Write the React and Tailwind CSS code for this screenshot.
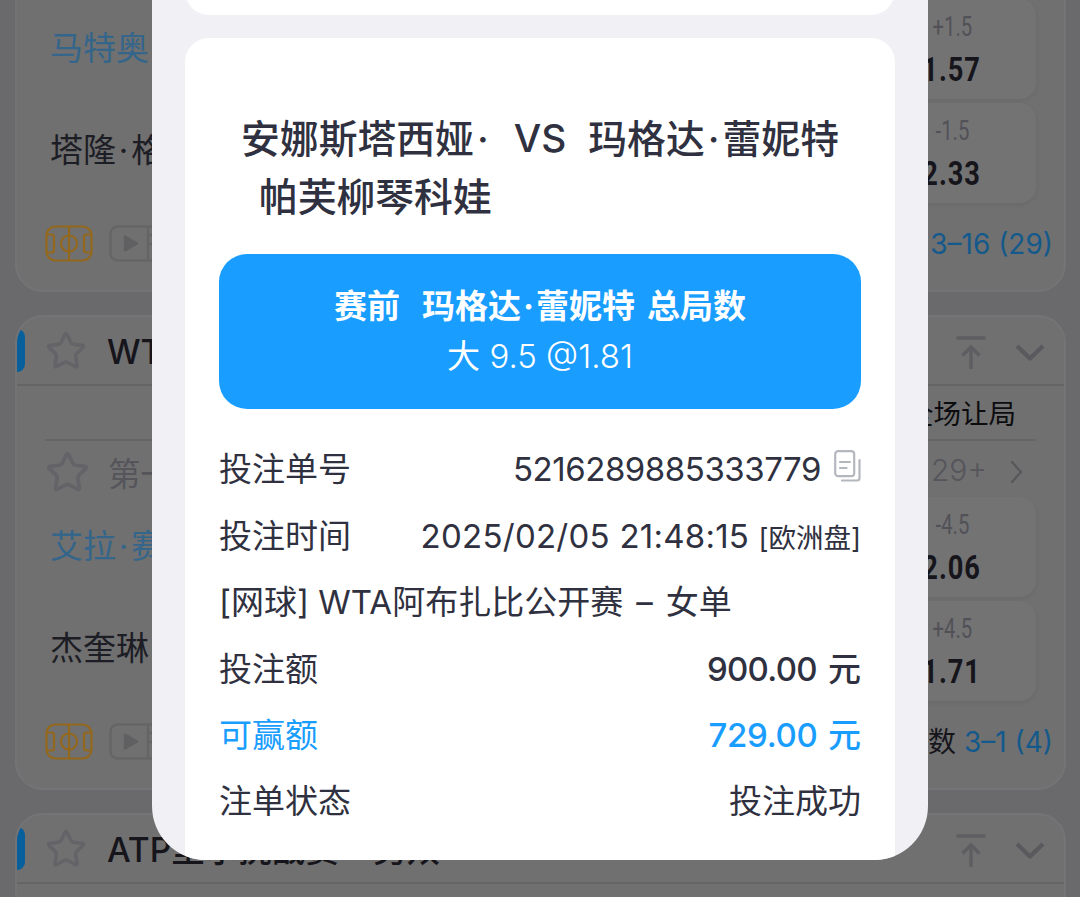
import React from "react";
import { Star } from "lucide-react";

const matches = [
  {
    league: "WTA阿布扎比公开赛 – 女单",
    home: "马特奥",
    away: "塔隆·格里",
    odds: [
      { line: "+1.5", price: "1.57" },
      { line: "-1.5", price: "2.33" },
    ],
    score: "3–16 (29)",
  },
  {
    league: "WTA阿布扎比公开赛 – 女单",
    home: "艾拉·赛德",
    away: "杰奎琳",
    odds: [
      { line: "-4.5", price: "2.06" },
      { line: "+4.5", price: "1.71" },
    ],
    score: "3–1 (4)",
  },
  {
    league: "ATP里尔挑战赛 – 男双",
    home: "",
    away: "",
    odds: [],
    score: "",
  },
];

// Names use a narrow middle dot between their parts
const Name = ({ children }) =>
  children.split("·").map((part, i) => (
    <React.Fragment key={i}>
      {i > 0 && <span className="inline-block w-[0.46em] text-center">·</span>}
      {part}
    </React.Fragment>
  ));

const CourtIcon = () => (
  <svg width="48" height="37" viewBox="0 0 48 37" fill="none" stroke="#94681c" strokeWidth="2.2">
    <rect x="1.5" y="1.5" width="45" height="34" rx="9" />
    <path d="M24 1.5v34M1.5 9.500H6.500a2.500 2.500 0 0 1 2.500 2.500v13a2.500 2.500 0 0 1-2.500 2.500H1.500M46.500 9.500h-5a2.500 2.500 0 0 0-2.500 2.500v13a2.500 2.500 0 0 0 2.500 2.500h5" />
    <circle cx="24" cy="18.500" r="8" />
  </svg>
);

const VideoIcon = () => (
  <svg width="56" height="37" viewBox="0 0 56 37" fill="none" stroke="#656566" strokeWidth="2.4">
    <rect x="1.500" y="1.500" width="53" height="34" rx="7" />
    <path d="M39 1.500v34M39 10h14M39 19h14" />
    <path d="M16 11.500v14l12-7z" fill="#606062" stroke="#606062" strokeLinejoin="round" />
  </svg>
);

const ToTopIcon = () => (
  <svg width="32" height="36" viewBox="0 0 32 36" fill="none" stroke="#5e5e62" strokeWidth="3.4">
    <path d="M1.500 5h29M16 36V14M7.500 22.500 16 14l8.500 8.500" />
  </svg>
);

const DownIcon = () => (
  <svg width="30" height="20" viewBox="0 0 30 20" fill="none" stroke="#5a5a5e" strokeWidth="4.400">
    <path d="m2 3 13 12.500L28 3" strokeLinejoin="round" />
  </svg>
);

const CopyIcon = () => (
  <svg width="27" height="32" viewBox="0 0 27 32" fill="none" stroke="#b5b7bf" strokeWidth="2.200" strokeLinecap="round">
    <rect x="1.200" y="1.200" width="19" height="25" rx="3" />
    <path d="M6 12h10M6 18h6.500M25.500 10v18a2.500 2.500 0 0 1-2.500 2.500H8" />
  </svg>
);

const MatchCard = ({ match }) => (
  <div className="h-[475px] shrink-0 overflow-hidden rounded-[28px] border-2 border-[#747476] bg-[#707070]">
    {/* League header */}
    <div className="flex h-[69px] items-center border-b-2 border-[#656568]">
      <div className="h-[43px] w-2 rounded-r-lg bg-[#075f9c]" />
      <Star className="ml-5 size-[42px] text-[#636368]" strokeWidth={2} />
      <span className="ml-5 flex-1 whitespace-nowrap pt-1 text-[33.500px] font-medium text-[#15151b]">
        {match.league}
      </span>
      <ToTopIcon />
      <div className="ml-7 mr-[19px] pt-1">
        <DownIcon />
      </div>
    </div>

    {/* Market header */}
    <div className="mx-7 flex h-[55px] items-center justify-end border-b-2 border-[#656567] pr-[20px] pt-1 text-[27.500px] text-[#0c0c0e]">
      全场让局
    </div>

    <div className="mx-7 flex h-[56px] items-center pt-1.5 text-[#55555b]">
      <Star className="size-[45px] text-[#636368]" strokeWidth={2} />
      <span className="ml-[18px] flex-1 pt-1.5 text-[32.500px]">第一盘</span>
      <span className="-mt-1 text-[30px] font-light">29+</span>
      <svg className="ml-[23px] mr-[13px]" width="13" height="24" viewBox="0 0 13 24" fill="none" stroke="currentColor" strokeWidth="2">
        <path d="m1.500 1.500 9.500 10.500L1.500 22.500" />
      </svg>
    </div>

    {/* Teams and odds */}
    <div className="mx-7 flex h-[204px] justify-between">
      <div className="flex flex-col pl-[5px] text-[33px]">
        <div className="flex h-[102px] items-center whitespace-nowrap pb-[3px] text-[#34658a]">
          <span><Name>{match.home}</Name></span>
        </div>
        <div className="flex h-[102px] items-center whitespace-nowrap pb-[3px] text-[#1d1d25]">
          <span><Name>{match.away}</Name></span>
        </div>
      </div>
      <div className="flex w-[168px] flex-col gap-1">
        {match.odds.map((odd) => (
          <div
            key={odd.line}
            className="flex h-[100px] flex-col items-center rounded-2xl bg-[#737374] pt-[9px] font-[Roboto] shadow-[0_2px_5px_rgba(0,0,0,0.06)]"
          >
            <span className="scale-x-[0.75] text-[27px] leading-[38px] text-[#515157]">{odd.line}</span>
            <span className="scale-x-[0.8] text-[34px] font-bold leading-[46px] tracking-[1.2px] text-[#15151b]">{odd.price}</span>
          </div>
        ))}
      </div>
    </div>

    {/* Footer */}
    <div className="flex h-[80px] items-center gap-4 pl-7 pr-[11px]">
      <CourtIcon />
      <VideoIcon />
      <span className="flex-1 pt-0.5 text-right text-[28px] text-[#15151b]">
        总局数 <span className="text-[#14598b]">{match.score}</span>
      </span>
    </div>
  </div>
);

const Row = ({ label, children, className = "" }) => (
  <div className={`flex h-[66.400px] items-center justify-between whitespace-nowrap ${className}`}>
    <span>{label}</span>
    {children}
  </div>
);

const BetSlip = () => (
  <div className="absolute left-[152px] top-0 flex h-[860px] w-[776px] flex-col overflow-hidden rounded-b-[54px] bg-[#f0f0f5] px-[33px] text-[#303140]">
    <div className="-mt-10 h-[55px] shrink-0 rounded-b-[24px] bg-white" />

    <div className="mt-[23px] flex-1 rounded-t-[24px] bg-white px-[34px] pt-[72px]">
      {/* Players */}
      <div className="flex justify-center text-[38.800px] font-medium leading-[58px]">
        <div className="text-right">
          <Name>安娜斯塔西娅·</Name>
          <br />
          帕芙柳琴科娃
        </div>
        <div className="-mt-px ml-[22px] mr-[22px]">VS</div>
        <div>
          <Name>玛格达·蕾妮特</Name>
        </div>
      </div>

      {/* Selection */}
      <div className="mt-7 flex h-[155px] flex-col items-center rounded-[28px] bg-[#199dff] pt-[27px] text-[33px] leading-[50px] text-white">
        <div className="flex font-bold">
          <span>赛前</span>
          <span className="ml-[22px]">
            <Name>玛格达·蕾妮特</Name>
          </span>
          <span className="ml-3">总局数</span>
        </div>
        <div>
          大 <span className="font-light">9.5 @1.81</span>
        </div>
      </div>

      {/* Details */}
      <div className="mt-7 text-[33px]">
        <Row label="投注单号">
          <span className="flex items-center">
            <span className="tracking-[-0.45px]">5216289885333779</span>
            <span className="-mt-2 ml-[13px]">
              <CopyIcon />
            </span>
          </span>
        </Row>
        <Row label="投注时间">
          <span>
            <span className="tracking-[0.25px]">2025/02/05 21:48:15</span>{" "}
            <span className="text-[27.500px]">[欧洲盘]</span>
          </span>
        </Row>
        <Row
          label={
            <>
              [网球] WTA阿布扎比公开赛<span className="mx-[13px]">–</span>女单
            </>
          }
        />
        <Row label="投注额">
          <span className="font-medium tracking-[-0.7px]">
            900.00 <span className="ml-[3px] tracking-normal">元</span>
          </span>
        </Row>
        <Row label="可赢额" className="text-[#199dff]">
          <span className="font-medium tracking-[-0.3px]">
            729.00 <span className="ml-0.5 tracking-normal">元</span>
          </span>
        </Row>
        <Row label="注单状态">
          <span>投注成功</span>
        </Row>
      </div>
    </div>
  </div>
);

export default function App() {
  return (
    <div className="relative h-[897px] w-[1080px] overflow-hidden bg-[#6a6a6c] font-['Inter','Noto_Sans_CJK_SC',sans-serif]">
      <div className="-mt-[183px] flex flex-col gap-[23px] pl-[15px] pr-[14px]">
        {matches.map((match, i) => (
          <MatchCard key={i} match={match} />
        ))}
      </div>
      <BetSlip />
    </div>
  );
}
